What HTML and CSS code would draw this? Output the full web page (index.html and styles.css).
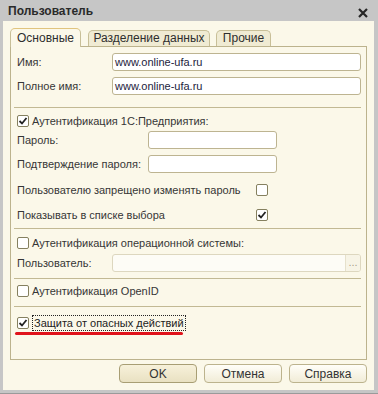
FILE: index.html
```html
<!DOCTYPE html>
<html lang="ru">
<head>
  <meta charset="UTF-8">
  <title>Пользователь</title>
  <link rel="stylesheet" href="styles.css">
</head>
<body>

  <div class="window">
    <div class="titlebar">
      <span class="title">Пользователь</span>
      <svg class="close" width="10" height="10" viewBox="0 0 10 10">
        <path d="M1 1 L9 9 M9 1 L1 9" stroke="#262626" stroke-width="2.2" fill="none"/>
      </svg>
    </div>

    <div class="client">
      <div class="tabs">
        <div class="tab active">Основные</div>
        <div class="tab">Разделение данных</div>
        <div class="tab last">Прочие</div>
      </div>

      <div class="panel">
        <div class="row r-name">
          <label class="lbl">Имя:</label>
          <div class="field">www.online-ufa.ru</div>
        </div>
        <div class="row r-full">
          <label class="lbl">Полное имя:</label>
          <div class="field">www.online-ufa.ru</div>
        </div>

        <div class="sep s1"></div>

        <div class="check-row c-1c">
          <span class="box checked"><svg width="10" height="10" viewBox="0 0 10 10"><path d="M1.5 5 L4 7.5 L8.5 2" stroke="#222" stroke-width="1.8" fill="none"/></svg></span>
          <span>Аутентификация 1С:Предприятия:</span>
        </div>
        <div class="row r-pass">
          <label class="lbl wide">Пароль:</label>
          <div class="field short"></div>
        </div>
        <div class="row r-conf">
          <label class="lbl wide">Подтверждение пароля:</label>
          <div class="field short"></div>
        </div>

        <div class="opt-row o-1">
          <span class="opt-lbl">Пользователю запрещено изменять пароль</span>
          <span class="box"></span>
        </div>
        <div class="opt-row o-2">
          <span class="opt-lbl">Показывать в списке выбора</span>
          <span class="box checked"><svg width="10" height="10" viewBox="0 0 10 10"><path d="M1.5 5 L4 7.5 L8.5 2" stroke="#222" stroke-width="1.8" fill="none"/></svg></span>
        </div>

        <div class="sep s2"></div>

        <div class="check-row c-os">
          <span class="box"></span>
          <span>Аутентификация операционной системы:</span>
        </div>
        <div class="row r-user">
          <label class="lbl">Пользователь:</label>
          <div class="field disabled">
            <span class="dots">...</span>
          </div>
        </div>

        <div class="sep s3"></div>

        <div class="check-row c-oid">
          <span class="box"></span>
          <span>Аутентификация OpenID</span>
        </div>

        <div class="sep s4"></div>

        <div class="check-row c-prot">
          <span class="box checked"><svg width="10" height="10" viewBox="0 0 10 10"><path d="M1.5 5 L4 7.5 L8.5 2" stroke="#222" stroke-width="1.8" fill="none"/></svg></span>
          <span class="focus">Защита от опасных действий</span>
        </div>
        <div class="mark"></div>
      </div>

      <div class="buttons">
        <button class="btn default">OK</button>
        <button class="btn">Отмена</button>
        <button class="btn">Справка</button>
      </div>
    </div>
  </div>

</body>
</html>
```

FILE: styles.css
```css
/* Базовые настройки */
* {
  margin: 0;
  padding: 0;
  box-sizing: border-box;
}

body {
  font-family: "Liberation Sans", Arial, sans-serif;
  font-size: 11px;
  color: #363636;
  background: #c8c8c8;
  white-space: nowrap;
}

.window {
  width: 378px;
  height: 394px;
  background: #c6c6c6;
  display: flex;
  flex-direction: column;
  border-bottom: 1px solid #9a9a9a;
}

.titlebar {
  height: 21px;
  display: flex;
  align-items: center;
  justify-content: space-between;
  padding: 1px 10px 0 8px;
}

.title {
  font-weight: bold;
  font-size: 12px;
  color: #2a2a2a;
}

.close {
  margin-top: 3px;
}

.client {
  margin: 0 4px 0 3px;
  height: 369px;
  background: #fbf8e9;
  padding-top: 7px;
}

/* Вкладки */
.tabs {
  display: flex;
  align-items: flex-end;
  padding-left: 7px;
  height: 19px;
}

.tab {
  height: 16px;
  margin-bottom: 1px;
  margin-right: 6px;
  padding: 0;
  line-height: 15px;
  font-size: 12px;
  background: #f0ebd3;
  border: 1px solid #c8bf98;
  border-bottom: none;
  border-radius: 5px 5px 0 0;
  color: #2e2e2e;
  text-align: center;
}

.tab.active {
  height: 19px;
  margin-bottom: 0;
  margin-right: 7px;
  background: #fbf8e9;
  border-top-color: #e0c47e;
  line-height: 18px;
  position: relative;
  z-index: 1;
  width: 71px;
}

.tab:nth-child(2) {
  width: 122px;
}

.tab.last {
  width: 55px;
}

/* Панель */
.panel {
  margin: -1px 7px 0 7px;
  height: 314px;
  border: 1px solid #bcb38d;
  display: flex;
  flex-direction: column;
  padding: 0 5px 0 6px;
}

.row {
  display: flex;
  align-items: center;
  height: 18px;
}

.lbl {
  width: 95px;
  flex-shrink: 0;
}

.lbl.wide {
  width: 131px;
}

.field {
  flex: 1;
  height: 18px;
  background: #fff;
  border: 1px solid #bdb491;
  border-radius: 3px;
  padding: 0 2px;
  line-height: 16px;
  color: #1c1c3c;
}

.field.short {
  flex: none;
  width: 129px;
}

.field.disabled {
  background: #fdfcf6;
  border-color: #ddd7bf;
  display: flex;
  justify-content: flex-end;
  padding: 0;
}

.dots {
  width: 15px;
  border-left: 1px solid #e6e1cc;
  background: #f7f4e6;
  color: #a8a28a;
  text-align: center;
  line-height: 14px;
  border-radius: 0 2px 2px 0;
}

.r-name { margin-top: 6px; }
.r-full { margin-top: 6px; }
.r-pass { margin-top: 3px; }
.r-conf { margin-top: 6px; }
.r-user { margin-top: 4px; }

.sep {
  height: 1px;
  margin-left: -3px;
  background: #c2b994;
}

.s1 { margin-top: 12px; }
.s2 { margin-top: 6px; }
.s3 { margin-top: 6px; }
.s4 { margin-top: 8px; }

/* Флажки */
.check-row {
  display: flex;
  align-items: center;
  gap: 3px;
  height: 14px;
}

.box {
  width: 12px;
  height: 12px;
  flex-shrink: 0;
  background: #fff;
  border: 1px solid #85805f;
  border-radius: 2px;
  display: flex;
  align-items: center;
  justify-content: center;
}

.c-1c { margin-top: 6px; }
.c-os { margin-top: 7px; }
.c-oid { margin-top: 5px; }
.c-prot { margin-top: 8px; height: 16px; }

.focus {
  border: 1px dotted #222;
  padding: 0 1px;
  line-height: 14px;
  color: #222;
}

.opt-row {
  display: flex;
  align-items: center;
  height: 14px;
}

.opt-lbl {
  width: 239px;
}

.o-1 { margin-top: 10px; }
.o-2 { margin-top: 11px; }

/* Красное подчёркивание */
.mark {
  margin: 1px 0 0 -2px;
  width: 168px;
  height: 3px;
  background: #e0141c;
  border-radius: 2px;
}

/* Кнопки */
.buttons {
  display: flex;
  justify-content: flex-end;
  gap: 7px;
  margin: 4px 7px 0 0;
}

.btn {
  width: 78px;
  height: 19px;
  font-family: "Liberation Sans", Arial, sans-serif;
  font-size: 12px;
  color: #333;
  background: linear-gradient(#fffef8, #f1ecd7);
  border: 1px solid #bcb38d;
  border-radius: 4px;
}

.btn.default {
  background: linear-gradient(#f7f1da, #e9e1c2);
  border-color: #a89e74;
}
```
